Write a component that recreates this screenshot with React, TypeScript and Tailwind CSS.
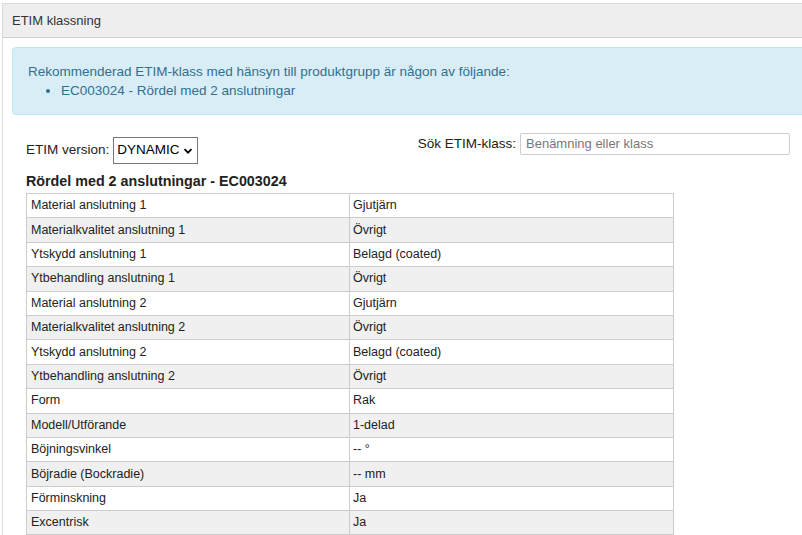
import React from "react";

const rows: [string, string][] = [
  ["Material anslutning 1", "Gjutjärn"],
  ["Materialkvalitet anslutning 1", "Övrigt"],
  ["Ytskydd anslutning 1", "Belagd (coated)"],
  ["Ytbehandling anslutning 1", "Övrigt"],
  ["Material anslutning 2", "Gjutjärn"],
  ["Materialkvalitet anslutning 2", "Övrigt"],
  ["Ytskydd anslutning 2", "Belagd (coated)"],
  ["Ytbehandling anslutning 2", "Övrigt"],
  ["Form", "Rak"],
  ["Modell/Utförande", "1-delad"],
  ["Böjningsvinkel", "-- °"],
  ["Böjradie (Bockradie)", "-- mm"],
  ["Förminskning", "Ja"],
  ["Excentrisk", "Ja"],
];

export default function App() {
  return (
    <div
      className="h-[535px] w-[802px] overflow-hidden bg-white pl-[2px] pt-[3px] text-[#333]"
      style={{ fontFamily: '"Liberation Sans", Arial, sans-serif' }}
    >
      {/* Panel */}
      <div className="w-[820px] border border-[#dcdcdc]">
        <div className="flex h-[34px] items-center border-b border-[#d0d0d0] bg-[#eeeeee] pl-[9px] text-[13px]">
          ETIM klassning
        </div>

        <div className="pl-[9px] pt-[9px]">
          {/* Info alert */}
          <div className="h-[68px] rounded-l-[4px] border border-[#bce8f1] bg-[#d9edf7] pl-[15px] pt-[14px] text-[13.5px] leading-[19px] text-[#31708f]">
            <div>Rekommenderad ETIM-klass med hänsyn till produktgrupp är någon av följande:</div>
            <ul className="list-disc pl-[33px]">
              <li>EC003024 - Rördel med 2 anslutningar</li>
            </ul>
          </div>

          <div className="pl-[14px] pr-[31px]">
            {/* Controls */}
            <div className="mt-[18px] flex items-start justify-between">
              <div className="mt-[4px] flex items-center text-[13.5px] text-[#222]">
                <span>ETIM version:</span>
                <div className="ml-[4px] flex h-[27px] w-[85px] items-center border border-[#767676] pl-[3px] text-black">
                  <span>DYNAMIC</span>
                  <svg className="ml-[3px]" width="10" height="10" viewBox="0 0 10 10">
                    <path d="M1.5 3.2 L5 6.7 L8.5 3.2" fill="none" stroke="#000" strokeWidth="1.8" />
                  </svg>
                </div>
              </div>
              <div className="flex items-center text-[13.5px] text-[#222]">
                <span>Sök ETIM-klass:</span>
                <div className="ml-[4px] flex h-[22px] w-[270px] items-center rounded-[2px] border border-[#cccccc] pl-[5px] text-[13px] text-[#777]">
                  Benämning eller klass
                </div>
              </div>
            </div>

            <div className="mt-[8px] text-[14.3px] font-bold leading-[18px] text-[#222]">
              Rördel med 2 anslutningar - EC003024
            </div>

            {/* Properties table */}
            <table className="mt-[3px] w-[648px] border-collapse text-[12.5px] text-[#222]">
              <tbody>
                {rows.map(([name, value], i) => (
                  <tr key={name} className={i % 2 === 1 ? "bg-[#f0f0f0]" : "bg-white"}>
                    <td className="h-[24.4px] w-[323px] border border-[#cccccc] px-[4px] py-0">{name}</td>
                    <td className="h-[24.4px] border border-[#cccccc] px-[3px] py-0">{value}</td>
                  </tr>
                ))}
              </tbody>
            </table>
          </div>
        </div>
      </div>
    </div>
  );
}
